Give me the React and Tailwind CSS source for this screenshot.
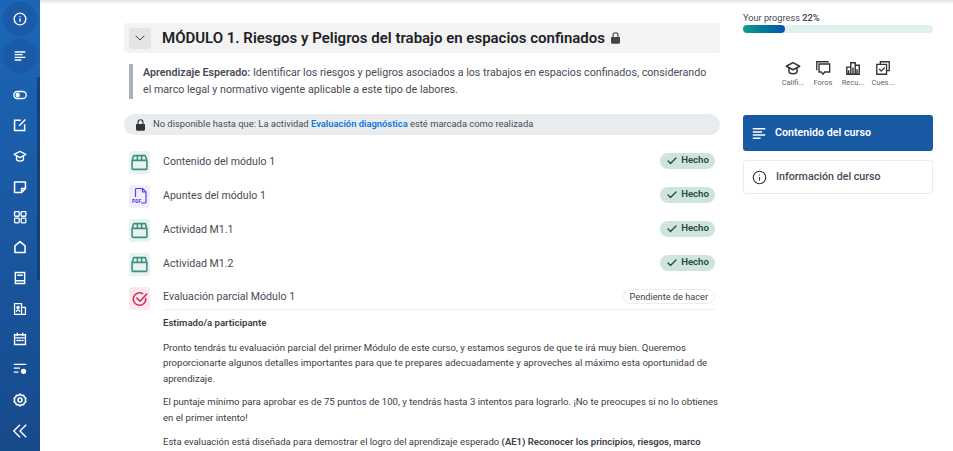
import { Check, ChevronDown, Info } from "lucide-react";

const font = { fontFamily: "Roboto, 'Noto Sans', sans-serif" };

function Svg({ className, children, w = 18, h = 18, sw = 1.7, fill = "none" }) {
  return (
    <svg viewBox={`0 0 ${w} ${h}`} className={className} fill={fill} stroke="currentColor" strokeWidth={sw} strokeLinecap="round" strokeLinejoin="round">
      {children}
    </svg>
  );
}

const ContentLines = ({ className }) => (
  <Svg className={className} h={16} w={18} sw={2}>
    <path strokeLinecap="butt" d="M1 2h16M1 6h12M1 10h16M1 14h10" />
  </Svg>
);
const PillToggle = ({ className }) => (
  <Svg className={className}>
    <rect x="1" y="4.500" width="16" height="9" rx="4.500" />
    <circle cx="6" cy="9" r="2" fill="currentColor" />
  </Svg>
);
const EditBox = ({ className }) => (
  <Svg className={className} sw={2}>
    <path strokeLinecap="butt" strokeLinejoin="miter" d="M10 3H2v13h13V8" />
    <path strokeLinecap="butt" d="M8 10l8-8" />
  </Svg>
);
const Cap = ({ className, sw = 1.7 }) => (
  <Svg className={className} sw={sw}>
    <path d="M9 3L1.500 7 9 11l7.500-4zM4.500 9v4c0 1.500 2 2.500 4.500 2.500s4.500-1 4.500-2.500V9" />
  </Svg>
);
const Sticky = ({ className }) => (
  <Svg className={className} sw={2}>
    <path d="M2 2.500h14V11l-5 5H2zM11 16v-5h5" />
  </Svg>
);
const Grid = ({ className }) => (
  <Svg className={className}>
    <rect x="2" y="2" width="6" height="6" rx="1" />
    <rect x="10.500" y="2" width="6" height="6" rx="1" />
    <rect x="2" y="10.500" width="6" height="6" rx="1" />
    <rect x="10.500" y="10.500" width="6" height="6" rx="1" />
  </Svg>
);
const HomeShape = ({ className }) => (
  <Svg className={className} sw={2}>
    <path d="M2.500 16V7.500L9 2l6.500 5.500V16z" />
  </Svg>
);
const BookShape = ({ className }) => (
  <Svg className={className} sw={1.8}>
    <path strokeLinejoin="miter" d="M3 2h12v14H3zM3 12.500h12M6 5.500h6" />
  </Svg>
);
const BookUser = ({ className }) => (
  <Svg className={className} sw={1.600}>
    <path d="M2 2h9v14H2zM11 7h5v9h-5" />
    <circle cx="6.500" cy="7" r="1.500" fill="currentColor" />
    <path d="M4.500 12c0-2 4-2 4 0" />
  </Svg>
);
const Calendar = ({ className }) => (
  <Svg className={className} sw={1.8}>
    <path strokeLinejoin="miter" d="M2 3.500h14v12.500H2zM2 7.500h14M5.500 1.500v3M12.500 1.500v3" />
    <path d="M5 11h2M8.500 11h1.500M12 11h1" />
  </Svg>
);
const FilterGear = ({ className }) => (
  <Svg className={className} h={16} sw={1.600}>
    <path strokeLinecap="butt" d="M1 2h16M1 7h8M1 12h6" />
    <circle cx="13.500" cy="11" r="2.600" fill="currentColor" />
  </Svg>
);
const Gear = ({ className }) => (
  <Svg className={className} sw={2}>
    <path d="M9 1.500l2 1.600 2.600-.2 1 2.400 2 1.600-.8 2.100.8 2.100-2 1.600-1 2.400-2.600-.2-2 1.600-2-1.600-2.600.2-1-2.400-2-1.600.8-2.100-.8-2.100 2-1.600 1-2.400 2.600.2z" />
    <circle cx="9" cy="9" r="2.600" />
  </Svg>
);
const DoubleChevron = ({ className }) => (
  <Svg className={className} sw={1.600}>
    <path strokeLinecap="butt" strokeLinejoin="miter" d="M9 2L2 9l7 7M16 2L9 9l7 7" />
  </Svg>
);
const LockSolid = ({ className }) => (
  <svg viewBox="0 0 14 16" className={className} fill="currentColor">
    <path d="M2 6.500h10a1 1 0 0 1 1 1V14a1.500 1.500 0 0 1-1.500 1.500h-9A1.500 1.500 0 0 1 1 14V7.500a1 1 0 0 1 1-1z" />
    <path d="M3.700 7V4.300a3.300 3.300 0 0 1 6.600 0V7" fill="none" stroke="currentColor" strokeWidth="1.500" />
  </svg>
);
const BoxIcon = ({ className }) => (
  <Svg className={className} sw={1.500}>
    <path d="M2 7l1.500-4.500h11L16 7v7.500a1 1 0 0 1-1 1H3a1 1 0 0 1-1-1zM2 7h14M7 2.500V7M11 2.500V7" />
  </Svg>
);
const PdfIcon = ({ className }) => (
  <svg viewBox="0 0 16 18" className={className} fill="none" stroke="currentColor" strokeWidth="1.200" strokeLinejoin="round">
    <path d="M3.500 10V2.500a1 1 0 0 1 1-1h6l3.500 3.500v10a1 1 0 0 1-1 1H9" />
    <path d="M10.500 1.500V5H14" />
    <text x="0" y="15.500" fontSize="5" fontWeight="700" fill="currentColor" stroke="none">PDF</text>
  </svg>
);
const QuizIcon = ({ className }) => (
  <Svg className={className} sw={1.8}>
    <path d="M15.500 8.500A7 7 0 1 1 12 3" />
    <path d="M5.500 8l3.500 3.500L16.500 3.500" />
  </Svg>
);
const Chat = ({ className }) => (
  <Svg className={className} sw={1.500}>
    <path strokeLinejoin="miter" d="M2 11V2h13" />
    <path strokeLinejoin="miter" d="M4.500 4.500h12v9H11l-2 2.500-2-2.500H4.500z" />
  </Svg>
);
const Bars = ({ className }) => (
  <Svg className={className} sw={1.600}>
    <path strokeLinejoin="miter" d="M2 16V8h4.500v8zM6.500 16V3h5v13zM11.500 16V6H16v10zM4 12v4M9 9v7M13.500 11v5" />
  </Svg>
);
const Stack = ({ className }) => (
  <Svg className={className} sw={1.500}>
    <path strokeLinejoin="miter" d="M6 5V2h10v10h-3M2 5h11v11H2z" />
    <path d="M5 10.500l2 2 3.500-3.500" />
  </Svg>
);

const railIcons = [
  { Icon: PillToggle, h: "h-[30px]" },
  { Icon: EditBox, h: "h-[30px]" },
  { Icon: Cap, h: "h-[31px]" },
  { Icon: Sticky, h: "h-[31px]" },
  { Icon: Grid, h: "h-[30px]" },
  { Icon: HomeShape, h: "h-[30px]" },
  { Icon: BookShape, h: "h-[31px]" },
  { Icon: BookUser, h: "h-[31px]" },
  { Icon: Calendar, h: "h-[29px]" },
  { Icon: FilterGear, h: "h-[31px]" },
  { Icon: Gear, h: "h-[32px]" },
  { Icon: DoubleChevron, h: "h-[30px]", big: true },
];

const rows = [
  { title: "Contenido del módulo 1", kind: "box" },
  { title: "Apuntes del módulo 1", kind: "pdf" },
  { title: "Actividad M1.1", kind: "box" },
  { title: "Actividad M1.2", kind: "box" },
];

function RowIcon({ kind }) {
  if (kind === "pdf") {
    return (
      <div className="flex h-[23px] w-[21px] items-center justify-center rounded-[3px] bg-[#f0eefc]">
        <PdfIcon className="h-[18px] w-[16px] text-[#4f46e5]" />
      </div>
    );
  }
  if (kind === "quiz") {
    return (
      <div className="flex h-[23px] w-[21px] items-center justify-center rounded-[3px] bg-[#fbe9ee]">
        <QuizIcon className="h-[16px] w-[16px] text-[#d8315b]" />
      </div>
    );
  }
  return (
    <div className="flex h-[23px] w-[21px] items-center justify-center rounded-[3px] bg-[#e6f3f0]">
      <BoxIcon className="h-[19px] w-[19px] text-[#3f8f7f]" />
    </div>
  );
}

export default function App() {
  return (
    <div className="relative flex h-[451px] w-[953px] overflow-hidden bg-white" style={font}>
      {/* shadow of the top bar, which is scrolled out of view */}
      <div className="absolute left-[40px] right-0 top-0 h-[4px] bg-gradient-to-b from-[#e2e2e2] to-white" />

      <aside className="relative flex h-full w-[40px] shrink-0 flex-col items-center bg-gradient-to-b from-[#1c66b8] to-[#174a8b] text-white">
        <div className="absolute right-0 top-[77px] h-[203px] w-[3px] bg-[#15417c]" />
        <div className="mt-[2px] flex h-[34px] w-[34px] items-center justify-center rounded-full bg-[#1a5aa6]">
          <Info className="h-[14px] w-[14px]" strokeWidth={2.4} />
        </div>
        <div className="mt-[3px] flex h-[34px] w-[34px] items-center justify-center rounded-full bg-[#1a5aa6]">
          <ContentLines className="h-[12px] w-[12px]" />
        </div>
        <div className="mt-[7px] flex w-full flex-col items-center">
          {railIcons.map(({ Icon, h, big }, i) => (
            <div key={i} className={`flex ${h} items-center justify-center`}>
              <Icon className={big ? "h-[16px] w-[16px]" : "h-[14px] w-[14px]"} />
            </div>
          ))}
        </div>
      </aside>

      <main className="ml-[84px] w-[596px] shrink-0 pt-[23px] text-[#4a4a55]">
        <div className="flex h-[30px] items-center rounded-[3px] bg-[#f3f3f3] pl-[5px]">
          <div className="flex h-[21px] w-[22px] items-center justify-center rounded-[3px] bg-[#e4e4e4]">
            <ChevronDown className="h-[16px] w-[16px] text-[#444]" strokeWidth={1.5} />
          </div>
          <h1 className="ml-[11px] flex items-center text-[15px] font-semibold text-[#1d2125]">
            MÓDULO 1. Riesgos y Peligros del trabajo en espacios confinados
            <LockSolid className="ml-[5px] h-[12px] w-[11px] text-[#444]" />
          </h1>
        </div>

        <div className="ml-[5px] mt-[11px] border-l-[4px] border-[#aab1ba] pl-[10px] pr-[8px] text-[10.7px] leading-[16.5px]">
          <p className="py-[1px]">
            <b className="font-semibold">Aprendizaje Esperado:</b> Identificar los riesgos y peligros asociados a los trabajos en espacios confinados, considerando el marco legal y normativo vigente aplicable a este tipo de labores.
          </p>
        </div>

        <div className="mt-[15px] flex h-[21px] items-center rounded-full bg-[#e9ecef] pl-[11px] text-[9.4px]">
          <LockSolid className="h-[12px] w-[11px] text-[#333]" />
          <span className="ml-[7px]">
            No disponible hasta que: La actividad <b className="font-semibold text-[#0f78d8]">Evaluación diagnóstica</b> esté marcada como realizada
          </span>
        </div>

        <div className="mt-[10px] pl-[5px]">
          {rows.map((r) => (
            <div key={r.title} className="flex h-[34px] items-center pr-[5px]">
              <RowIcon kind={r.kind} />
              <span className="mb-[1px] ml-[13px] flex-1 text-[10.6px]">{r.title}</span>
              <span className="mb-[3px] flex h-[16px] w-[55px] items-center justify-center gap-[3px] rounded-full bg-[#cfe5dc] text-[9.6px] font-semibold text-[#24483d]">
                <Check className="h-[12px] w-[12px]" strokeWidth={2.6} />
                Hecho
              </span>
            </div>
          ))}
          <div className="flex h-[28px] items-start pr-[5px] pt-[6px]">
            <RowIcon kind="quiz" />
            <span className="ml-[13px] mt-[2px] flex-1 text-[10.6px]">Evaluación parcial Módulo 1</span>
            <span className="mt-[2px] flex h-[15px] items-center rounded-full border border-[#ececec] px-[6px] text-[9.2px] text-[#444]">
              Pendiente de hacer
            </span>
          </div>
          <div className="ml-[34px] mr-[5px] border-t border-[#efefef] pt-[5px] text-[9.6px] leading-[15.6px] text-[#3c3c44]">
            <p className="font-semibold">Estimado/a participante</p>
            <p className="mt-[9px]">
              Pronto tendrás tu evaluación parcial del primer Módulo de este curso, y estamos seguros de que te irá muy bien. Queremos proporcionarte algunos detalles importantes para que te prepares adecuadamente y aproveches al máximo esta oportunidad de aprendizaje.
            </p>
            <p className="-mr-[5px] mt-[8px]">
              El puntaje mínimo para aprobar es de 75 puntos de 100, y tendrás hasta 3 intentos para lograrlo. ¡No te preocupes si no lo obtienes en el primer intento!
            </p>
            <p className="mt-[8px] text-[9.5px]">
              Esta evaluación está diseñada para demostrar el logro del aprendizaje esperado <b className="font-semibold">(AE1) Reconocer los principios, riesgos, marco</b>
            </p>
          </div>
        </div>
      </main>

      <section className="ml-[23px] w-[190px] shrink-0 pt-[12px] text-[#4a4a55]">
        <p className="text-[9.2px] leading-[11px]">Your progress <b className="font-semibold">22%</b></p>
        <div className="mt-[2px] h-[8px] w-full rounded-full bg-[#dff0ee]">
          <div className="h-full w-[22%] rounded-full bg-gradient-to-r from-[#189a8a] to-[#0b55a8]" />
        </div>

        <div className="mt-[27px] flex justify-center gap-[7px] text-[7.5px] text-[#666]">
          {[
            { Icon: Cap, label: "Califi..." },
            { Icon: Chat, label: "Foros" },
            { Icon: Bars, label: "Recu..." },
            { Icon: Stack, label: "Cues..." },
          ].map(({ Icon, label }) => (
            <div key={label} className="flex w-[23px] flex-col items-center">
              <Icon className="h-[16px] w-[16px] text-[#333]" />
              <span className="mt-[1px] whitespace-nowrap">{label}</span>
            </div>
          ))}
        </div>

        <div className="mt-[27px] flex h-[36px] items-center rounded-[3px] bg-[#175aa3] pl-[9px] text-white">
          <ContentLines className="h-[13px] w-[14px]" />
          <span className="ml-[9px] text-[10.7px] font-semibold">Contenido del curso</span>
        </div>
        <div className="mt-[9px] flex h-[34px] items-center rounded-[3px] border border-[#e6ecf5] pl-[8px]">
          <Info className="h-[15px] w-[15px] text-[#333]" strokeWidth={1.8} />
          <span className="ml-[9px] text-[10.7px] font-medium">Información del curso</span>
        </div>
      </section>
    </div>
  );
}
